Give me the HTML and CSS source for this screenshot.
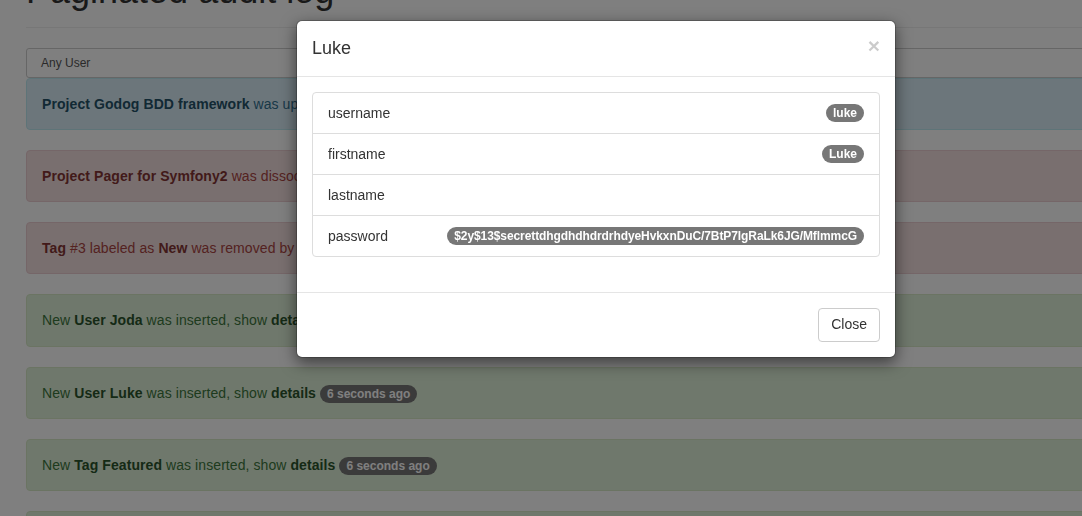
FILE: index.html
```html
<!DOCTYPE html>
<html lang="en">
<head>
<meta charset="utf-8">
<title>Paginated audit log</title>
<link rel="stylesheet" href="styles.css">
</head>
<body>
<div class="page">
  <div class="container">
    <div class="page-header"><h1>Paginated audit log</h1></div>
    <div class="user-select">Any User</div>
    <div class="alert alert-info"><b class="alert-link">Project Godog BDD framework</b> was updated, show <b class="alert-link">details</b> <span class="badge">6 seconds ago</span></div>
    <div class="alert alert-danger"><b class="alert-link">Project Pager for Symfony2</b> was dissociated from <b class="alert-link">Tag #2</b> <span class="badge">6 seconds ago</span></div>
    <div class="alert alert-danger"><b class="alert-link">Tag</b> #3 labeled as <b class="alert-link">New</b> was removed by <b class="alert-link">Luke</b> <span class="badge">6 seconds ago</span></div>
    <div class="alert alert-success">New <b class="alert-link">User Joda</b> was inserted, show <b class="alert-link">details</b> <span class="badge">6 seconds ago</span></div>
    <div class="alert alert-success">New <b class="alert-link">User Luke</b> was inserted, show <b class="alert-link">details</b> <span class="badge">6 seconds ago</span></div>
    <div class="alert alert-success">New <b class="alert-link">Tag Featured</b> was inserted, show <b class="alert-link">details</b> <span class="badge">6 seconds ago</span></div>
    <div class="alert alert-success">New <b class="alert-link">Tag New</b> was inserted, show <b class="alert-link">details</b> <span class="badge">6 seconds ago</span></div>
  </div>
  <div class="backdrop"></div>
  <div class="modal">
    <div class="modal-dialog">
      <div class="modal-content">
        <div class="modal-header">
          <h4 class="modal-title">Luke</h4>
          <span class="close">&times;</span>
        </div>
        <div class="modal-body">
          <ul class="list-group">
            <li class="list-group-item"><span>username</span><span class="badge">luke</span></li>
            <li class="list-group-item"><span>firstname</span><span class="badge">Luke</span></li>
            <li class="list-group-item"><span>lastname</span></li>
            <li class="list-group-item"><span>password</span><span class="badge badge-long">$2y$13$secrettdhgdhdhdrdrhdyeHvkxnDuC/7BtP7lgRaLk6JG/MflmmcG</span></li>
          </ul>
        </div>
        <div class="modal-footer">
          <button class="btn">Close</button>
        </div>
      </div>
    </div>
  </div>
</div>
</body>
</html>
```

FILE: styles.css
```css
html, body {
  margin: 0;
  overflow: hidden;
  height: 100%;
}
body {
  font-family: "Liberation Sans", Arial, Helvetica, sans-serif;
  font-size: 14px;
  line-height: 1.42857;
  color: #333;
  background: #fff;
}
.page {
  display: flow-root;
  position: relative;
  width: 1192px;
}
.container {
  width: 1140px;
  margin: 0 auto;
  padding: 0 15px;
}
.page-header {
  margin: -29px 0 20px;
  padding-bottom: 9px;
  border-bottom: 1px solid #eee;
}
.page-header h1 {
  margin: 0 0 7px;
  font-size: 36px;
  font-weight: 500;
  line-height: 1.1;
  color: #333;
}
.user-select {
  height: 30px;
  box-sizing: border-box;
  padding: 5px 14px;
  font-size: 12px;
  line-height: 18px;
  border: 1px solid #ccc;
  border-radius: 3px;
  background: #fff;
  color: #555;
}
.alert {
  padding: 15px;
  margin-bottom: 20px;
  border: 1px solid transparent;
  border-radius: 4px;
  line-height: 20px;
  letter-spacing: 0.08px;
}
.alert-link { font-weight: bold; }
.alert-info { background: #d9edf7; border-color: #bce8f1; color: #31708f; }
.alert-info .alert-link { color: #245269; }
.alert-danger { background: #f2dede; border-color: #ebccd1; color: #a94442; }
.alert-danger .alert-link { color: #843534; }
.alert-success { background: #dff0d8; border-color: #d6e9c6; color: #3c763d; }
.alert-success .alert-link { color: #2b542c; }
.badge {
  display: inline-block;
  min-width: 10px;
  padding: 3px 7px;
  font-size: 12px;
  font-weight: bold;
  line-height: 1;
  color: #fff;
  text-align: center;
  white-space: nowrap;
  vertical-align: middle;
  background: #777;
  border-radius: 10px;
  letter-spacing: 0;
}
.badge-long {
  letter-spacing: -0.09px;
}
.backdrop {
  position: fixed;
  inset: 0;
  background: rgba(0, 0, 0, 0.5);
  z-index: 10;
}
.modal {
  position: absolute;
  top: 0;
  left: 0;
  right: 0;
  z-index: 20;
}
.modal-dialog {
  width: 600px;
  margin: 20px auto 0;
}
.modal-content {
  background: #fff;
  border: 1px solid rgba(0, 0, 0, 0.2);
  border-radius: 6px;
  box-shadow: 0 5px 15px rgba(0, 0, 0, 0.5);
  background-clip: padding-box;
}
.modal-header {
  display: flex;
  justify-content: space-between;
  align-items: flex-start;
  padding: 15px;
  border-bottom: 1px solid #e5e5e5;
}
.modal-title {
  margin: 0;
  font-size: 18px;
  font-weight: 500;
  line-height: 25px;
}
.close {
  font-size: 21px;
  font-weight: bold;
  line-height: 1;
  color: #000;
  opacity: 0.2;
  margin-top: -1px;
}
.modal-body {
  padding: 15px;
}
.list-group {
  list-style: none;
  margin: 0 0 20px;
  padding: 0;
}
.list-group-item {
  display: flex;
  justify-content: space-between;
  align-items: center;
  padding: 10px 15px;
  line-height: 20px;
  border: 1px solid #ddd;
  margin-bottom: -1px;
  background: #fff;
}
.list-group-item:first-child { border-radius: 4px 4px 0 0; }
.list-group-item:last-child { border-radius: 0 0 4px 4px; margin-bottom: 0; }
.modal-footer {
  display: flex;
  justify-content: flex-end;
  padding: 15px;
  border-top: 1px solid #e5e5e5;
}
.btn {
  font-family: inherit;
  font-size: 14px;
  line-height: 1.42857;
  padding: 6px 12px;
  color: #333;
  background: #fff;
  border: 1px solid #ccc;
  border-radius: 4px;
}
```
